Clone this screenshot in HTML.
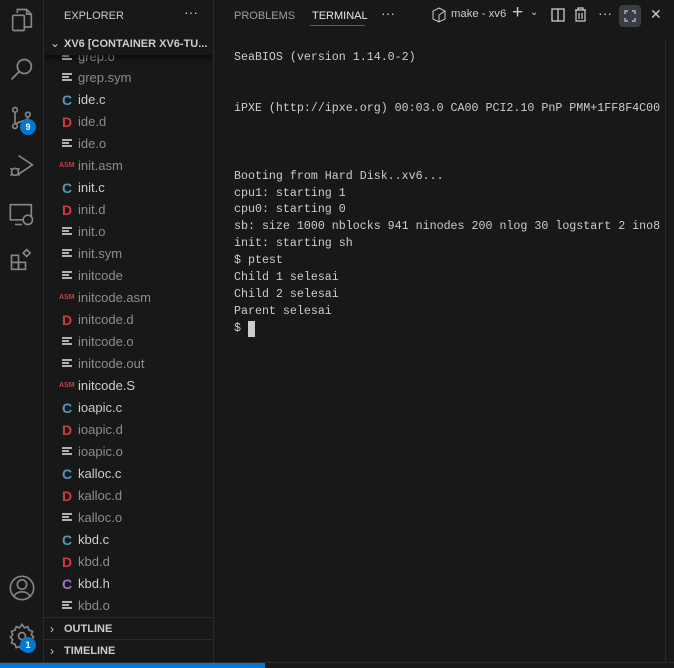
<!DOCTYPE html>
<html><head><meta charset="utf-8"><style>
*{margin:0;padding:0;box-sizing:border-box}
body{width:674px;height:667px;overflow:hidden;background:#181818;font-family:"Liberation Sans",sans-serif;position:relative;color:#ccc}
.act{position:absolute;left:0;top:0;width:44px;height:662px;background:#181818;border-right:1px solid #2b2b2b}
.act svg{position:absolute;left:8px}
.badge{position:absolute;width:16px;height:16px;border-radius:8px;background:#0078d4;color:#fff;font-size:9px;font-weight:bold;text-align:center;line-height:16px}
.side{position:absolute;left:44px;top:0;width:170px;height:662px;background:#181818;border-right:1px solid #2b2b2b;overflow:hidden}
.row{position:absolute;left:0;width:169px;height:22px;font-size:13px;line-height:22px}
.row .n{position:absolute;left:34px;color:#8c8c8c}
.row.b .n{color:#cccccc}
.ic{position:absolute;left:16px;top:0;width:14px;text-align:center;font-weight:bold;font-size:14px}
.ic.c{color:#519aba}.ic.d{color:#cc3e44}.ic.h{color:#a074c4}
.ic.asm{color:#cc3e44;font-size:7px;font-weight:bold;left:15px}
.ic.l{left:18px;top:6px;width:10px;height:10px}
.ic.l i{display:block;height:2px;background:#b0b0b0;margin-bottom:1px}
.hdr{position:absolute;left:0;top:33px;width:169px;height:22px;background:#181818;box-shadow:0 3px 4px rgba(0,0,0,.5);font-size:11px;font-weight:bold;line-height:22px;color:#ccc;z-index:2}
.sec{position:absolute;left:0;width:169px;height:22px;border-top:1px solid #2b2b2b;font-size:11px;font-weight:bold;line-height:22px;background:#181818}
.term{position:absolute;left:234px;top:50px;font-family:"Liberation Mono",monospace;font-size:11.65px;line-height:16.94px;white-space:pre;color:#cccccc}
.status{position:absolute;left:0;top:662px;width:674px;height:5px;background:#181818;border-top:1px solid #2b2b2b}
</style></head><body>
<div class="act">
<svg style="top:6px" width="28" height="28" viewBox="0 0 24 24" fill="none" stroke="#868686" stroke-width="1.4"><path d="M8 6V3h8l4 4v11h-6"/><rect x="4" y="8" width="10" height="13" rx="1"/><path d="M16 3v4h4"/></svg>
<svg style="top:56px" width="28" height="28" viewBox="0 0 24 24" fill="none" stroke="#868686" stroke-width="1.5"><circle cx="14" cy="9" r="6"/><path d="M10 13l-7 7"/></svg>
<svg style="top:104px" width="28" height="28" viewBox="0 0 24 24" fill="none" stroke="#868686" stroke-width="1.4"><circle cx="6" cy="5" r="2"/><circle cx="6" cy="19" r="2"/><circle cx="17" cy="9" r="2"/><path d="M6 7v10M17 11c0 4-6 3-10 6"/></svg>
<div class="badge" style="left:20px;top:119px">9</div>
<svg style="top:152px" width="28" height="28" viewBox="0 0 24 24" fill="none" stroke="#868686" stroke-width="1.4"><path d="M9 3l12 8-12 8"/><circle cx="6" cy="17" r="3"/><path d="M2 14l2 1M2 20l2-1M10 14l-2 1M10 20l-2-1"/></svg>
<svg style="top:200px" width="28" height="28" viewBox="0 0 24 24" fill="none" stroke="#868686" stroke-width="1.4"><rect x="2" y="4" width="18" height="13"/><path d="M6 21h6"/><circle cx="17" cy="17" r="4" fill="#181818"/></svg>
<svg style="top:246px" width="28" height="28" viewBox="0 0 24 24" fill="none" stroke="#868686" stroke-width="1.4"><rect x="3" y="8" width="6" height="6"/><rect x="3" y="14" width="6" height="6"/><rect x="9" y="14" width="6" height="6"/><path d="M13 6l3-3 3 3-3 3z"/></svg>
<svg style="top:574px" width="28" height="28" viewBox="0 0 24 24" fill="none" stroke="#868686" stroke-width="1.4"><circle cx="12" cy="12" r="10"/><circle cx="12" cy="9" r="4"/><path d="M5 19c3-5 11-5 14 0"/></svg>
<svg style="top:622px" width="28" height="28" viewBox="0 0 24 24" fill="none" stroke="#868686" stroke-width="1.4"><circle cx="12" cy="12" r="3"/><path d="M12 2l2 3 3-1 1 3 3 1-1 3 2 2-2 2 1 3-3 1-1 3-3-1-2 3-2-3-3 1-1-3-3-1 1-3-2-2 2-2-1-3 3-1 1-3 3 1z"/></svg>
<div class="badge" style="left:20px;top:637px">1</div>
</div>
<div class="side">
<div style="position:absolute;left:20px;top:10px;font-size:11px;color:#ccc">EXPLORER</div>
<div style="position:absolute;left:140px;top:4px;font-size:14px;color:#ccc">···</div>
<div class="hdr"><span style="position:absolute;left:6px;top:-1px;font-weight:normal;font-size:12px">⌄</span><span style="position:absolute;left:20px">XV6 [CONTAINER XV6-TU...</span></div>
<div class="row" style="top:46px"><span class="ic l"><i></i><i style="width:7px"></i><i></i></span><span class="n">grep.o</span></div>
<div class="row" style="top:67px"><span class="ic l"><i></i><i style="width:7px"></i><i></i></span><span class="n">grep.sym</span></div>
<div class="row b" style="top:89px"><span class="ic c">C</span><span class="n">ide.c</span></div>
<div class="row" style="top:111px"><span class="ic d">D</span><span class="n">ide.d</span></div>
<div class="row" style="top:133px"><span class="ic l"><i></i><i style="width:7px"></i><i></i></span><span class="n">ide.o</span></div>
<div class="row" style="top:155px"><span class="ic asm">ASM</span><span class="n">init.asm</span></div>
<div class="row b" style="top:177px"><span class="ic c">C</span><span class="n">init.c</span></div>
<div class="row" style="top:199px"><span class="ic d">D</span><span class="n">init.d</span></div>
<div class="row" style="top:221px"><span class="ic l"><i></i><i style="width:7px"></i><i></i></span><span class="n">init.o</span></div>
<div class="row" style="top:243px"><span class="ic l"><i></i><i style="width:7px"></i><i></i></span><span class="n">init.sym</span></div>
<div class="row" style="top:265px"><span class="ic l"><i></i><i style="width:7px"></i><i></i></span><span class="n">initcode</span></div>
<div class="row" style="top:287px"><span class="ic asm">ASM</span><span class="n">initcode.asm</span></div>
<div class="row" style="top:309px"><span class="ic d">D</span><span class="n">initcode.d</span></div>
<div class="row" style="top:331px"><span class="ic l"><i></i><i style="width:7px"></i><i></i></span><span class="n">initcode.o</span></div>
<div class="row" style="top:353px"><span class="ic l"><i></i><i style="width:7px"></i><i></i></span><span class="n">initcode.out</span></div>
<div class="row b" style="top:375px"><span class="ic asm">ASM</span><span class="n">initcode.S</span></div>
<div class="row b" style="top:397px"><span class="ic c">C</span><span class="n">ioapic.c</span></div>
<div class="row" style="top:419px"><span class="ic d">D</span><span class="n">ioapic.d</span></div>
<div class="row" style="top:441px"><span class="ic l"><i></i><i style="width:7px"></i><i></i></span><span class="n">ioapic.o</span></div>
<div class="row b" style="top:463px"><span class="ic c">C</span><span class="n">kalloc.c</span></div>
<div class="row" style="top:485px"><span class="ic d">D</span><span class="n">kalloc.d</span></div>
<div class="row" style="top:507px"><span class="ic l"><i></i><i style="width:7px"></i><i></i></span><span class="n">kalloc.o</span></div>
<div class="row b" style="top:529px"><span class="ic c">C</span><span class="n">kbd.c</span></div>
<div class="row" style="top:551px"><span class="ic d">D</span><span class="n">kbd.d</span></div>
<div class="row b" style="top:573px"><span class="ic h">C</span><span class="n">kbd.h</span></div>
<div class="row" style="top:595px"><span class="ic l"><i></i><i style="width:7px"></i><i></i></span><span class="n">kbd.o</span></div>
<div class="sec" style="top:617px"><span style="position:absolute;left:6px;font-weight:normal;font-size:12px">›</span><span style="position:absolute;left:20px">OUTLINE</span></div>
<div class="sec" style="top:639px"><span style="position:absolute;left:6px;font-weight:normal;font-size:12px">›</span><span style="position:absolute;left:20px">TIMELINE</span></div>
</div>
<div style="position:absolute;left:234px;top:10px;font-size:11px;color:#9d9d9d">PROBLEMS</div>
<div style="position:absolute;left:312px;top:10px;font-size:11px;color:#e7e7e7">TERMINAL</div>
<div style="position:absolute;left:310px;top:25px;width:55px;height:1px;background:#0078d4"></div>
<div style="position:absolute;left:381px;top:5px;font-size:14px;color:#ccc">···</div>
<svg style="position:absolute;left:432px;top:7px" width="14" height="16" viewBox="0 0 14 16" fill="none" stroke="#ccc" stroke-width="1"><path d="M7 1l6 3v8l-6 3-6-3V4z"/><path d="M7 8l6-4M7 8v7" /></svg>
<div style="position:absolute;left:451px;top:8px;font-size:11.3px;color:#ccc">make - xv6</div>
<div style="position:absolute;left:512px;top:2px;font-size:19px;color:#ccc">+</div>
<div style="position:absolute;left:530px;top:7px;font-size:10px;color:#ccc">⌄</div>
<svg style="position:absolute;left:551px;top:8px" width="14" height="14" fill="none" stroke="#ccc" stroke-width="1.3"><rect x="1" y="1" width="12" height="12"/><path d="M7 1v12"/></svg>
<svg style="position:absolute;left:574px;top:7px" width="13" height="15" fill="none" stroke="#ccc" stroke-width="1.2"><path d="M1 3h11M4 3V1h5v2M2 3v11h9V3M5 6v6M8 6v6"/></svg>
<div style="position:absolute;left:598px;top:5px;font-size:14px;color:#ccc">···</div>
<div style="position:absolute;left:619px;top:5px;width:22px;height:22px;border-radius:4px;background:#3a3d45"></div>
<svg style="position:absolute;left:624px;top:10px" width="12" height="12" fill="none" stroke="#ccc" stroke-width="1.2"><path d="M1 4V1h3M8 1h3v3M11 8v3H8M4 11H1V8"/></svg>
<div style="position:absolute;left:650px;top:6px;font-size:14px;color:#ccc">✕</div>
<div class="term">SeaBIOS (version 1.14.0-2)


iPXE (http://ipxe.org) 00:03.0 CA00 PCI2.10 PnP PMM+1FF8F4C00



Booting from Hard Disk..xv6...
cpu1: starting 1
cpu0: starting 0
sb: size 1000 nblocks 941 ninodes 200 nlog 30 logstart 2 ino8
init: starting sh
$ ptest
Child 1 selesai
Child 2 selesai
Parent selesai
$ </div>
<div style="position:absolute;left:248px;top:321px;width:7px;height:16px;background:#cccccc"></div>
<div style="position:absolute;left:665px;top:40px;width:1px;height:622px;background:#2b2b2b"></div>
<div class="status"><div style="width:265px;height:5px;background:#0078d4"></div></div>
</body></html>
